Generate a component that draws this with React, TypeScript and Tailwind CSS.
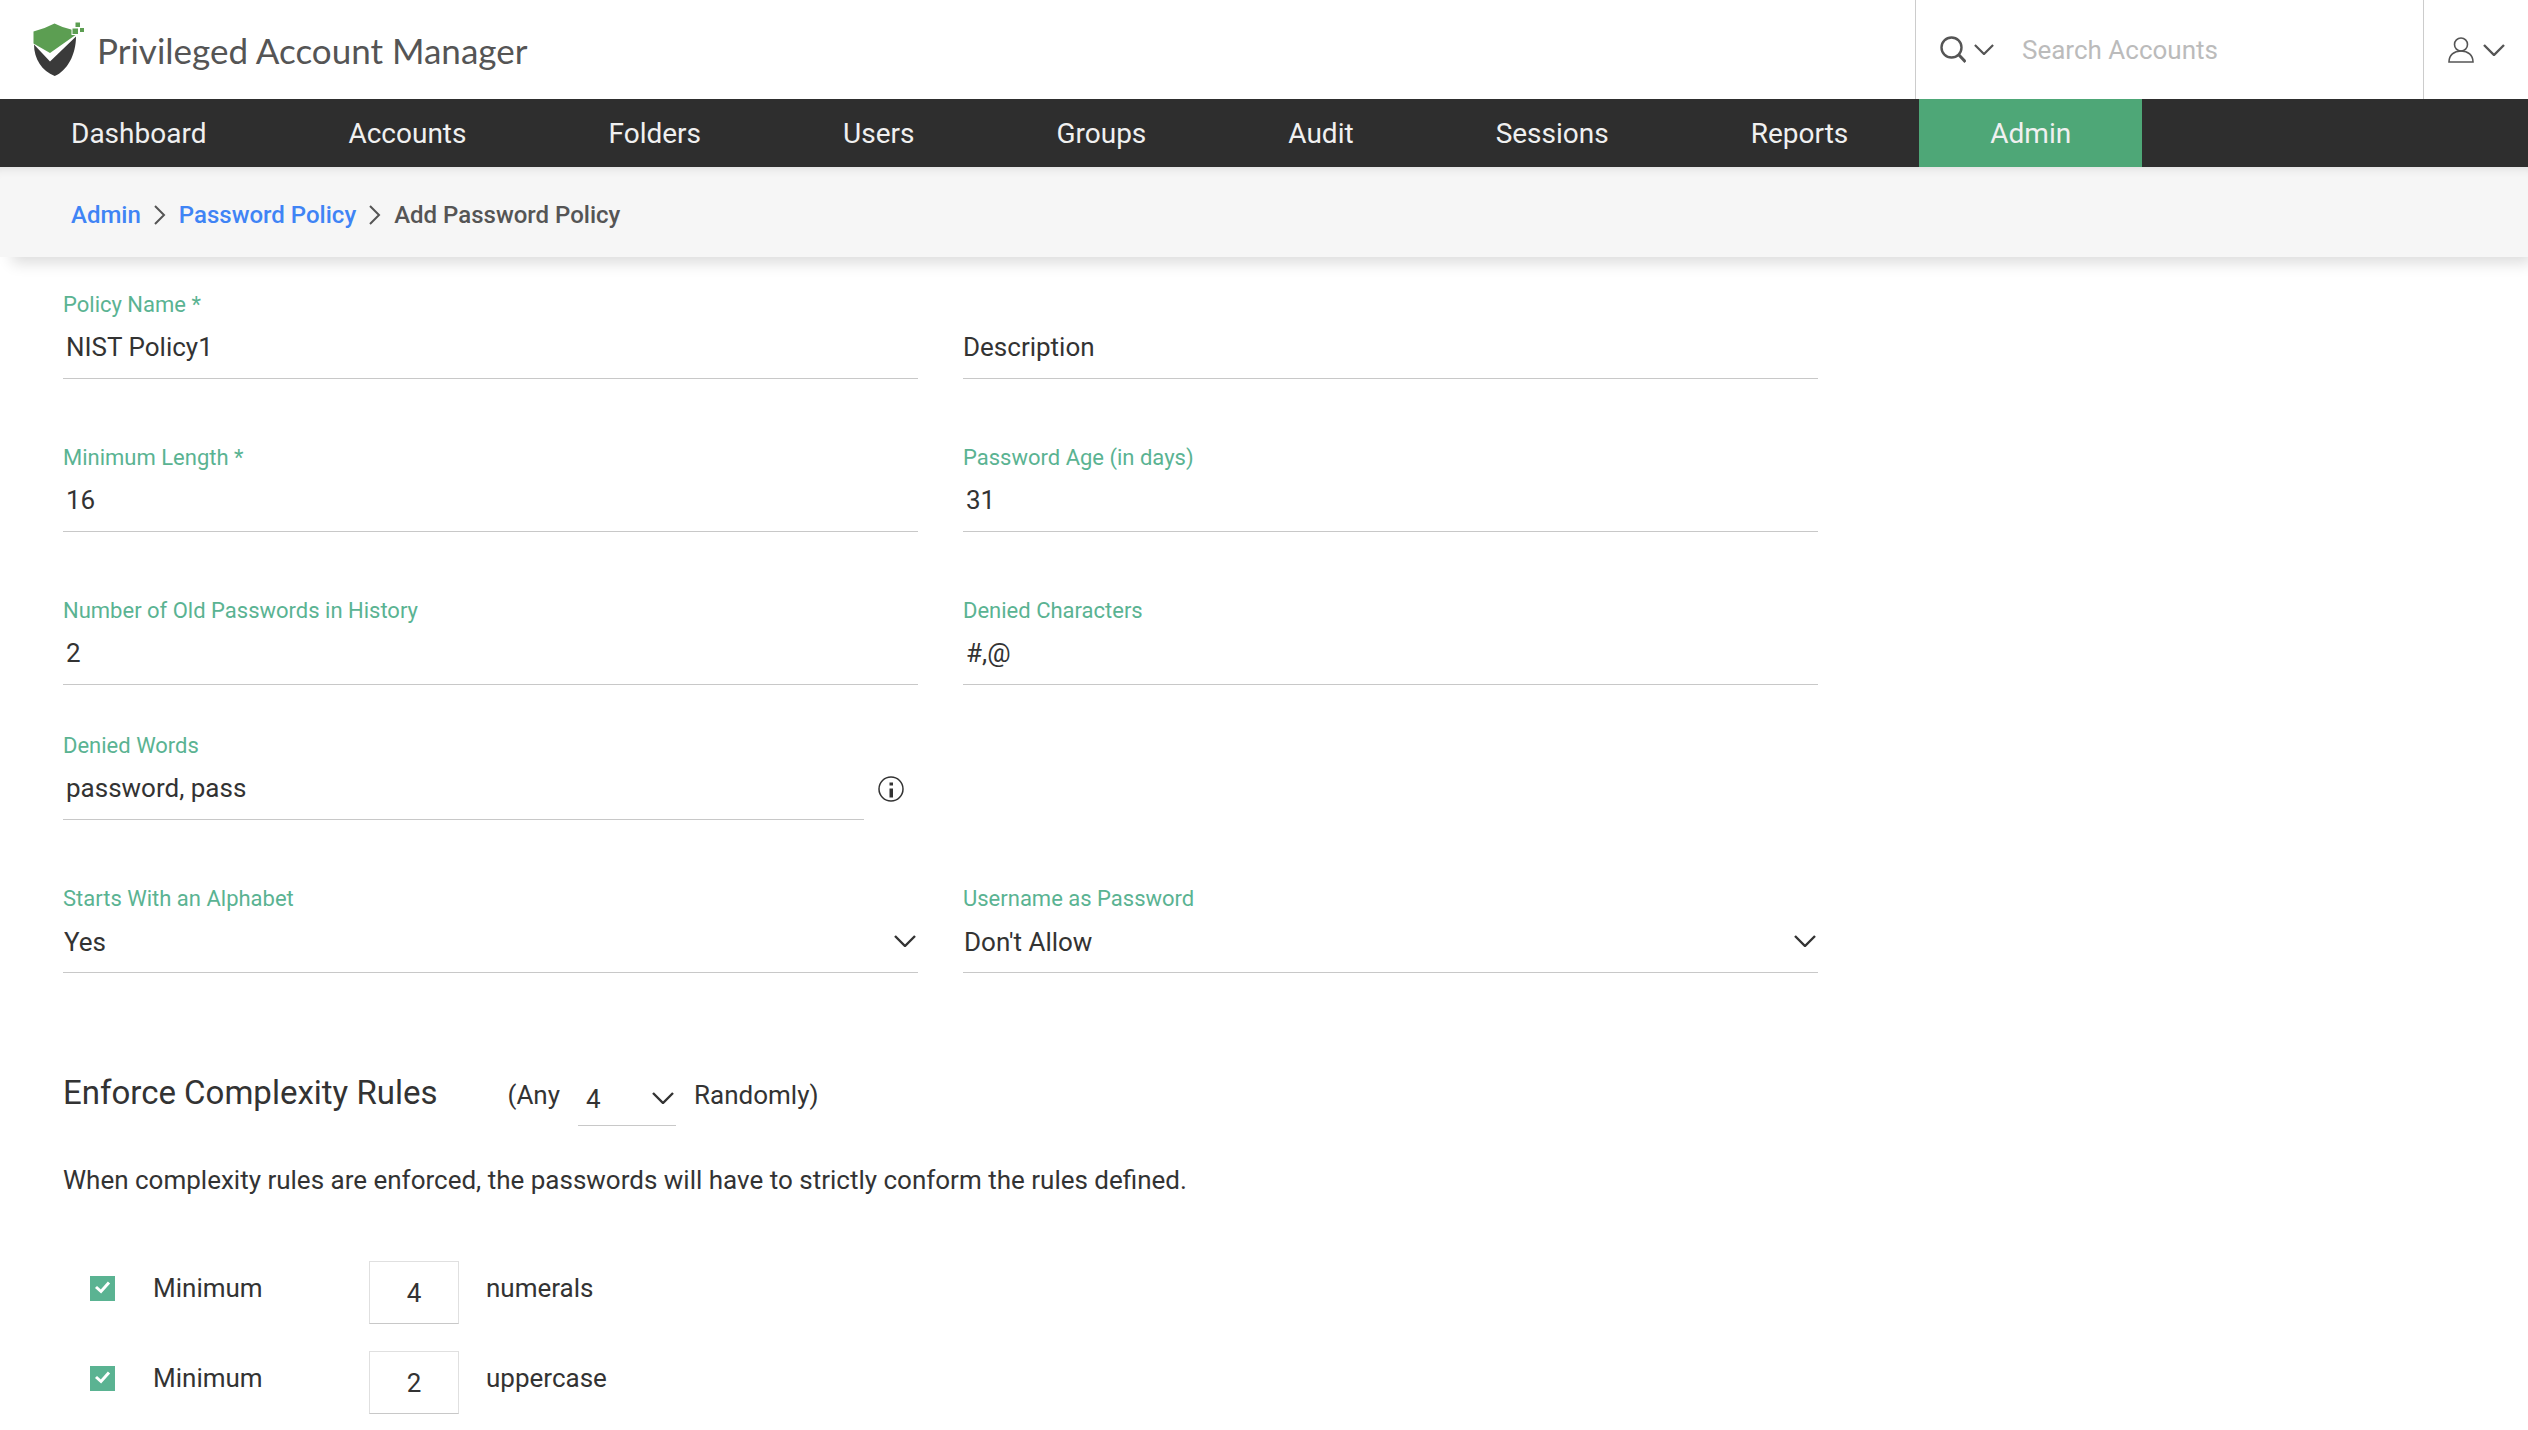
import { useState } from 'react';
import type { ReactNode } from 'react';

const NAV_ITEMS = [
  'Dashboard',
  'Accounts',
  'Folders',
  'Users',
  'Groups',
  'Audit',
  'Sessions',
  'Reports',
  'Admin',
];

const RULES = [
  { id: 'numerals', label: 'numerals', count: '4' },
  { id: 'uppercase', label: 'uppercase', count: '2' },
];

function Logo() {
  return (
    <svg viewBox="0 0 52 56" className="w-[52px] h-14 shrink-0" aria-hidden="true">
      <path fill="#5c9e52" d="M.5 9.500Q12 6.500 21.500 1.500 30 6 40 8L42.500 13 17 31 .5 21.500Z" />
      <path fill="#3a3a3a" d="M1 22.500 17 39.500 43 14.500C43 33 34 49 21.700 54 9 49 1 37 1 22.500Z" />
      <path
        fill="#5c9e52"
        stroke="#fff"
        strokeWidth="2"
        paintOrder="stroke"
        d="M39.500 6.500h5.500v5.500h-5.500zM42.500.5h4.500v4.500h-4.500zM47 6h4v4h-4z"
      />
    </svg>
  );
}

function Chevron({ className = 'w-[22px] h-3' }: { className?: string }) {
  return (
    <svg
      viewBox="0 0 22 12"
      className={`shrink-0 pointer-events-none ${className}`}
      fill="none"
      stroke="currentColor"
      strokeWidth="2.400"
      aria-hidden="true"
    >
      <path d="M1 1 11 11 21 1" />
    </svg>
  );
}

function Crumb({ children }: { children: ReactNode }) {
  return (
    <>
      <a href="#" className="text-[#3f84f5]">
        {children}
      </a>
      <svg
        viewBox="0 0 12 20"
        className="w-3 h-5 mx-[13px]"
        fill="none"
        stroke="currentColor"
        strokeWidth="2"
        aria-hidden="true"
      >
        <path d="M1 1 10 10 1 19" />
      </svg>
    </>
  );
}

interface TextFieldProps {
  id: string;
  label: string;
  value: string;
  className?: string;
}

function TextField({ id, label, value, className }: TextFieldProps) {
  return (
    <div className={`flex flex-col ${className ?? ''}`}>
      <label htmlFor={id} className="text-[22px] leading-[26px] text-[#5ab392]">
        {label}
      </label>
      <input
        id={id}
        defaultValue={value}
        className="w-full h-[61px] px-[3px] pb-[2px] border-b border-[#c8c8c8] bg-transparent outline-none"
      />
    </div>
  );
}

interface SelectFieldProps {
  id: string;
  label: string;
  options: string[];
}

function SelectField({ id, label, options }: SelectFieldProps) {
  return (
    <div className="flex flex-col">
      <label htmlFor={id} className="text-[22px] leading-[26px] text-[#5ab392]">
        {label}
      </label>
      <div className="relative">
        <select
          id={id}
          className="block w-full h-[61px] pl-px border-b border-[#c8c8c8] bg-transparent appearance-none outline-none"
        >
          {options.map((o) => (
            <option key={o}>{o}</option>
          ))}
        </select>
        <Chevron className="w-[22px] h-3 absolute right-[2px] top-[23px]" />
      </div>
    </div>
  );
}

function RuleRow({ id, label, count }: { id: string; label: string; count: string }) {
  const [checked, setChecked] = useState(true);
  return (
    <div className="flex items-start leading-[54px]">
      <label className="flex items-center w-[279px]">
        <input
          type="checkbox"
          checked={checked}
          onChange={(e) => setChecked(e.target.checked)}
          className="peer appearance-none w-[25px] h-[25px] shrink-0 border border-[#5ab392] checked:bg-[#5ab392]"
        />
        <svg
          viewBox="0 0 25 25"
          className="w-[25px] h-[25px] -ml-[25px] shrink-0 opacity-0 peer-checked:opacity-100 pointer-events-none"
          fill="none"
          stroke="#fff"
          strokeWidth="3"
          aria-hidden="true"
        >
          <path d="M6 11 11 15.500 19 6.500" />
        </svg>
        <span className="ml-[38px]">Minimum</span>
      </label>
      <input
        id={id}
        defaultValue={count}
        className="w-[90px] h-[63px] text-center border border-[#e0e0e0] border-b-[#c8c8c8] outline-none"
      />
      <label htmlFor={id} className="ml-[27px]">
        {label}
      </label>
    </div>
  );
}

export default function App() {
  return (
    <div className="min-h-screen bg-white text-[#333] text-[26px] font-[Roboto,'Liberation_Sans',sans-serif]">
      <header className="flex items-stretch h-[99px] text-[#555]">
        <a href="#" className="flex items-center pl-[33px] gap-3">
          <Logo />
          <span className="pt-[2px] text-[35px] font-[Lato,'Noto_Sans',sans-serif]">
            Privileged Account Manager
          </span>
        </a>
        <div className="ml-auto flex items-center w-[508px] pl-6 border-l border-[#ccc]">
          <button type="button" aria-label="Search in" className="flex items-center gap-2">
            <svg
              viewBox="0 0 26 28"
              className="w-[26px] h-7"
              fill="none"
              stroke="currentColor"
              strokeWidth="2.400"
              aria-hidden="true"
            >
              <circle cx="11.500" cy="11.500" r="10" />
              <path d="M18.500 18.500 25.500 26" strokeWidth="3" />
            </svg>
            <Chevron className="w-5 h-[11px]" />
          </button>
          <input
            type="text"
            aria-label="Search Accounts"
            placeholder="Search Accounts"
            className="ml-7 pt-[2px] min-w-0 flex-1 outline-none placeholder:text-[#bbb]"
          />
        </div>
        <button
          type="button"
          aria-label="Account menu"
          className="flex items-center w-[105px] pl-6 gap-[9px] border-l border-[#ccc]"
        >
          <svg
            viewBox="0 0 26 26"
            className="w-[26px] h-[26px]"
            fill="none"
            stroke="currentColor"
            strokeWidth="1.600"
            aria-hidden="true"
          >
            <circle cx="13" cy="7.500" r="6.500" />
            <path d="M1 25C1 18 6 14 13 14S25 18 25 25Z" />
          </svg>
          <Chevron />
        </button>
      </header>

      <nav className="flex h-[68px] bg-[#2e2e2e] text-[28px] text-[#f0f0f0]">
        {NAV_ITEMS.map((item) => (
          <a
            key={item}
            href="#"
            className={`flex items-center px-[71px] pt-[2px] ${item === 'Admin' ? 'bg-[#4ea777]' : ''}`}
          >
            {item}
          </a>
        ))}
      </nav>

      <div className="flex items-center h-[90px] px-[71px] pt-1.5 bg-[#f6f6f6] text-2xl font-medium text-[#555] shadow-[8px_10px_14px_-4px_rgba(0,0,0,0.14),inset_0_10px_10px_-8px_rgba(0,0,0,0.1)]">
        <Crumb>Admin</Crumb>
        <Crumb>Password Policy</Crumb>
        <span>Add Password Policy</span>
      </div>

      <form className="pl-[63px] pt-[35px]">
        <div className="max-w-[1755px]">
          <div className="grid grid-cols-2 gap-x-[45px] gap-y-[66px]">
            <TextField id="name" label="Policy Name *" value="NIST Policy1" />
            <div className="flex flex-col justify-end">
              <input
                aria-label="Description"
                placeholder="Description"
                className="w-full h-[61px] pb-[2px] border-b border-[#c8c8c8] outline-none placeholder:text-[#333]"
              />
            </div>
            <TextField id="min-length" label="Minimum Length *" value="16" />
            <TextField id="age" label="Password Age (in days)" value="31" />
            <TextField id="history" label="Number of Old Passwords in History" value="2" />
            <TextField id="denied-chars" label="Denied Characters" value="#,@" />
          </div>

          <div className="grid grid-cols-2 gap-x-[45px] gap-y-[66px] mt-12">
            <div className="flex items-end">
              <TextField
                id="denied-words"
                label="Denied Words"
                value="password, pass"
                className="flex-1"
              />
              <button
                type="button"
                aria-label="About denied words"
                className="flex items-center justify-center w-[54px] h-[61px] pb-[2px]"
              >
                <svg viewBox="0 0 26 26" className="w-[26px] h-[26px]" aria-hidden="true">
                  <circle cx="13" cy="13" r="12" fill="none" stroke="#333" strokeWidth="1.500" />
                  <path fill="#333" d="M11.500 6.500h3.500v3h-3.500zM11.500 12.500h3.500v9h-3.500z" />
                </svg>
              </button>
            </div>
            <div />
            <SelectField id="starts-with" label="Starts With an Alphabet" options={['Yes', 'No']} />
            <SelectField
              id="username-pass"
              label="Username as Password"
              options={["Don't Allow", 'Allow']}
            />
          </div>
        </div>

        <div className="flex items-start mt-[99px] leading-[46px]">
          <h2 className="text-[33px] leading-[42px]">Enforce Complexity Rules</h2>
          <label htmlFor="any-count" className="ml-[70px]">
            (Any
          </label>
          <div className="relative ml-[18px] mr-[18px]">
            <select
              id="any-count"
              defaultValue="4"
              className="block w-[98px] h-[54px] pl-2 border-b border-[#c8c8c8] bg-transparent appearance-none outline-none"
            >
              <option>1</option>
              <option>2</option>
              <option>3</option>
              <option>4</option>
            </select>
            <Chevron className="w-[22px] h-3 absolute right-[2px] top-5" />
          </div>
          <span>Randomly)</span>
        </div>

        <p className="mt-[34px] leading-10">
          When complexity rules are enforced, the passwords will have to strictly conform the rules
          defined.
        </p>

        <div className="flex flex-col gap-[27px] mt-[61px] pl-[27px]">
          {RULES.map((r) => (
            <RuleRow key={r.id} {...r} />
          ))}
        </div>
      </form>
    </div>
  );
}
